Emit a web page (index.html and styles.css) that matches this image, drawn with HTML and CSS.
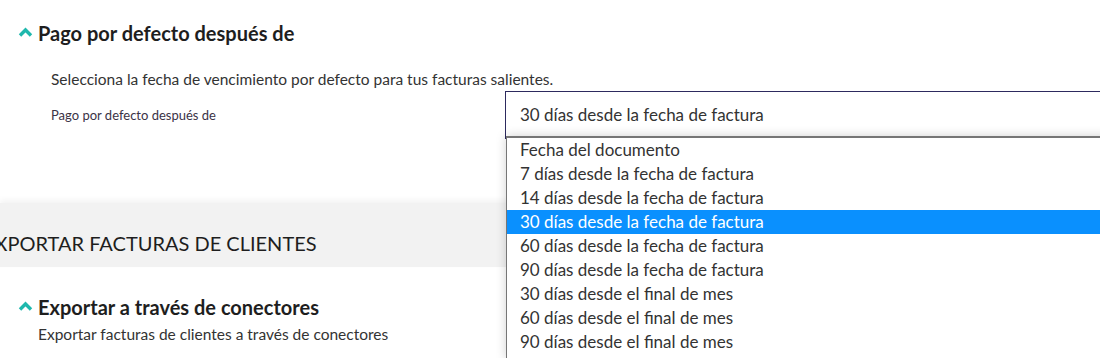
FILE: index.html
```html
<!DOCTYPE html>
<html>
<head>
  <link rel="stylesheet" href="styles.css">
</head>
<body>
  <div class="page">
    <section class="setting">
      <h2 class="setting-title">
        <svg class="chevron" width="15" height="10" viewBox="0 0 15 10"><path d="M2 8.5 L7.5 3 L13 8.5" fill="none" stroke="#1fb8ad" stroke-width="3.4"/></svg>
        Pago por defecto después de
      </h2>
      <div class="setting-body">
        <p class="setting-desc">Selecciona la fecha de vencimiento por defecto para tus facturas salientes.</p>
        <div class="field-row">
          <label class="field-label">Pago por defecto después de</label>
          <div class="select-wrap">
            <div class="select">30 días desde la fecha de factura</div>
            <ul class="dropdown">
              <li>Fecha del documento</li>
              <li>7 días desde la fecha de factura</li>
              <li>14 días desde la fecha de factura</li>
              <li class="active">30 días desde la fecha de factura</li>
              <li>60 días desde la fecha de factura</li>
              <li>90 días desde la fecha de factura</li>
              <li>30 días desde el final de mes</li>
              <li>60 días desde el final de mes</li>
              <li>90 días desde el final de mes</li>
            </ul>
          </div>
        </div>
      </div>
    </section>

    <div class="group-header">EXPORTAR FACTURAS DE CLIENTES</div>

    <section class="setting setting-second">
      <h2 class="setting-title">
        <svg class="chevron" width="15" height="10" viewBox="0 0 15 10"><path d="M2 8.5 L7.5 3 L13 8.5" fill="none" stroke="#1fb8ad" stroke-width="3.4"/></svg>
        Exportar a través de conectores
      </h2>
      <p class="setting-note">Exportar facturas de clientes a través de conectores</p>
    </section>
  </div>
</body>
</html>
```

FILE: styles.css
```css
html,
body {
  height: 358px;
}

body {
  font-family: 'Lato', sans-serif;
  margin: 0;
  padding: 0;
  color: #333;
  background: #fff;
  overflow: hidden;
}

.page {
  width: 1100px;
  height: 358px;
}

.setting {
  padding: 21px 0 0 18px;
}

.setting-title {
  display: flex;
  align-items: center;
  gap: 5px;
  font-size: 20px;
  font-weight: 700;
  line-height: 24px;
  color: #1e1e1e;
  margin: 0;
}

.chevron {
  display: block;
  margin-top: -3px;
}

.setting-body {
  padding-left: 33px;
}

.setting-desc {
  font-size: 15.5px;
  line-height: 20px;
  margin: 24px 0 0;
}

.field-row {
  display: grid;
  grid-template-columns: 454px 620px;
  margin-top: 2px;
  height: 112px;
}

.field-label {
  font-size: 13px;
  line-height: 16px;
  padding-top: 16px;
  color: #3b3346;
}

.select-wrap {
  position: relative;
}

.select {
  height: 46px;
  border: 1px solid #2d2a5e;
  padding: 0 14px;
  font-size: 17px;
  line-height: 46px;
  color: #333;
}

.dropdown {
  position: absolute;
  top: 45px;
  left: 1px;
  width: 640px;
  margin: 0;
  padding: 0 0 4px;
  list-style: none;
  background: #fff;
  border: 1px solid #767676;
  border-top-width: 2px;
  box-shadow: 0 0 10px rgba(0, 0, 0, 0.18);
  z-index: 2;
}

.dropdown li {
  height: 24px;
  line-height: 24px;
  padding-left: 13px;
  font-size: 17px;
  color: #333;
}

.dropdown li.active {
  background: #0a90fe;
  color: #fff;
}

.group-header {
  background: #f2f2f2;
  height: 64px;
  box-shadow: 0 -3px 6px rgba(0, 0, 0, 0.05);
  font-size: 20px;
  line-height: 24px;
  padding-top: 28px;
  box-sizing: border-box;
  text-indent: -17px;
  color: #1e1e1e;
}

.setting-second {
  padding-top: 28px;
}

.setting-note {
  font-size: 15.5px;
  line-height: 20px;
  margin: 5px 0 0 20px;
}
```
